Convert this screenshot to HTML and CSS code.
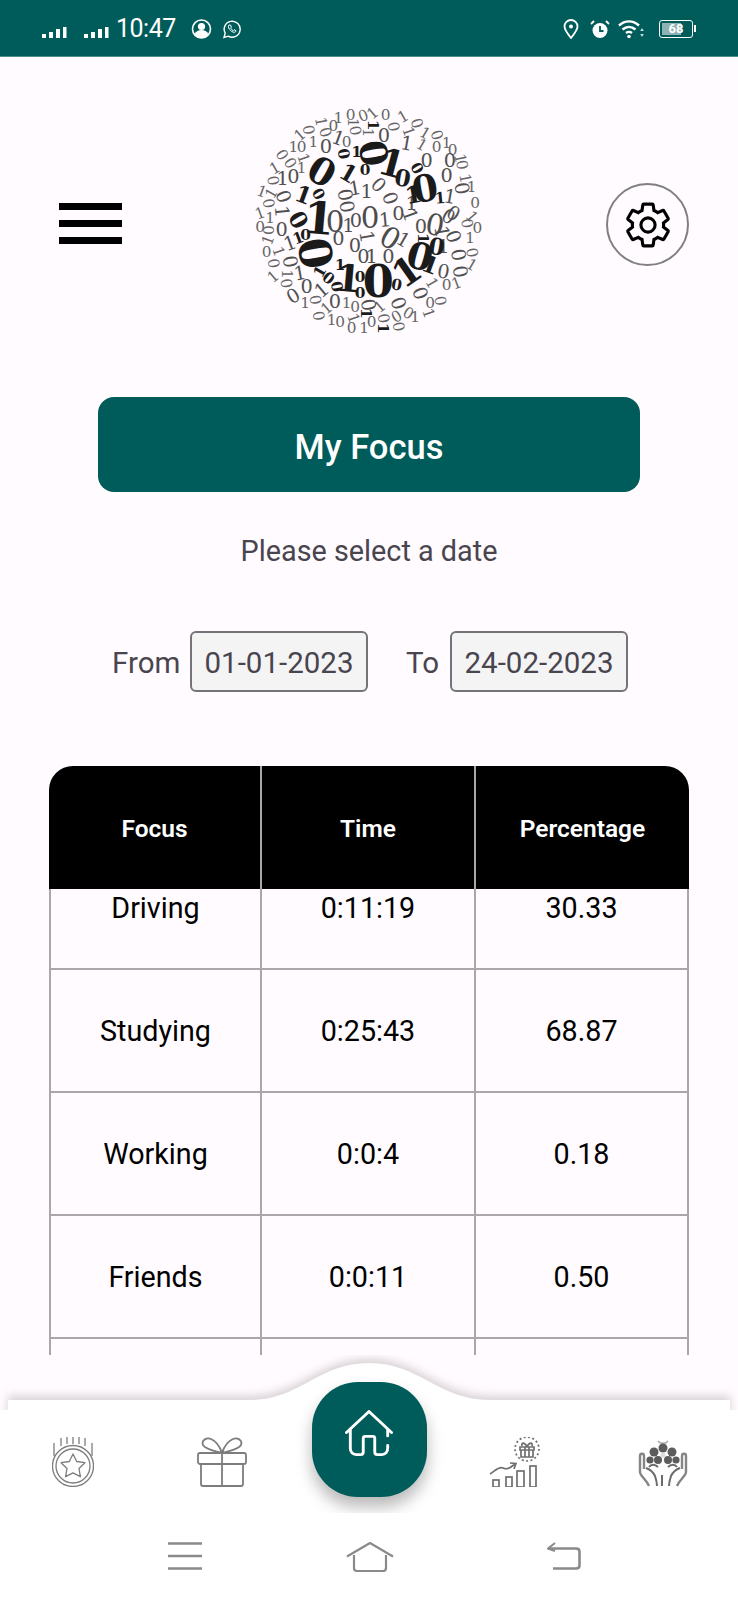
FILE: index.html
```html
<!DOCTYPE html>
<html lang="en">
<head>
    <meta charset="UTF-8">
    <meta name="viewport" content="width=device-width, initial-scale=1.0">
    <title>My Focus</title>
    <link rel="stylesheet" href="styles.css">
</head>
<body>
    <div class="status-bar">
        <svg class="st-signal" viewBox="0 0 25 11"><rect x="0" y="7" width="4" height="4"/><rect x="7" y="5" width="4" height="6"/><rect x="14" y="2" width="4" height="9"/><rect x="21" y="0" width="3.5" height="11"/></svg>
        <svg class="st-signal st-signal-2" viewBox="0 0 25 11"><rect x="0" y="7" width="4" height="4"/><rect x="7" y="5" width="4" height="6"/><rect x="14" y="2" width="4" height="9"/><rect x="21" y="0" width="3.5" height="11"/></svg>
        <span class="st-time">10:47</span>
        <svg class="st-person" viewBox="0 0 21 20"><circle cx="10.5" cy="10" r="9" fill="none" stroke="#fff" stroke-width="1.6"/><circle cx="10.5" cy="7.5" r="3.6" fill="#fff"/><path d="M3.5 15.5c1.5-3.5 4-4.5 7-4.5s5.500 1 7 4.500c-2 2.500-4.500 3.500-7 3.500s-5-1-7-3.500z" fill="#fff"/></svg>
        <svg class="st-whatsapp" viewBox="0 0 20 20" fill="none" stroke="#fff" stroke-width="1.400"><path d="M2 18.500l1.200-4.300a8 8 0 1 1 3 3z"/><path d="M7 6c-1 1-.8 2.500.5 4.300s3 2.900 4.700 3c1 0 1.800-.8 1.800-1.600l-2-1-.9.900c-1-.4-2-1.400-2.500-2.500l.8-1-.9-2.100z" stroke-width="1"/></svg>
        <span class="st-spacer"></span>
        <svg class="st-pin" viewBox="0 0 16 20" fill="none" stroke="#fff" stroke-width="1.800"><path d="M8 19C4 14 1.500 10.500 1.500 7.500a6.500 6.500 0 0 1 13 0C14.500 10.500 12 14 8 19z"/><circle cx="8" cy="7.500" r="2" fill="#fff" stroke="none"/></svg>
        <svg class="st-alarm" viewBox="0 0 20 20"><circle cx="10" cy="11.500" r="7.500" fill="#fff"/><path d="M10 7v5h3.500" fill="none" stroke="#005c5a" stroke-width="1.800"/><path d="M1 5l3-3M19 5l-3-3" stroke="#fff" stroke-width="1.800" fill="none"/></svg>
        <svg class="st-wifi" viewBox="0 0 26 20" fill="none" stroke="#fff" stroke-width="2.400"><path d="M1 6.500c6-5.500 14-5.500 20 0M4.500 10.500c4-3.500 9-3.500 13 0M8 14c2-1.500 4-1.500 6 0"/><circle cx="11" cy="17.500" r="1.800" fill="#fff" stroke="none"/><path d="M24 9l-1.800 3h3.600zM24 18l-1.800-3h3.600z" fill="#c4dcdb" stroke="none"/></svg>
        <div class="st-battery"><span class="st-battery-level">68</span></div>
    </div>

    <div class="top-row">
        <div class="menu-btn"><span></span><span></span><span></span></div>

        <svg class="logo" viewBox="0 0 780 720">
            <g class="bit bit-xs">
                <text transform="translate(332 45) rotate(0)">0</text>
                <text transform="translate(370 48) rotate(-20)">0</text>
                <text transform="translate(398 40) rotate(-40)">1</text>
                <text transform="translate(437 45)">0</text>
                <text transform="translate(490 50) rotate(-30)">1</text>
                <text transform="translate(530 70) rotate(70)">0</text>
                <text transform="translate(242 65) rotate(80)">1</text>
                <text transform="translate(280 78)">0</text>
                <text transform="translate(295 55)">1</text>
                <text transform="translate(340 68) rotate(90)">1</text>
                <text transform="translate(345 92) rotate(80)">0</text>
                <text transform="translate(460 80) rotate(80)">0</text>
                <text transform="translate(385 98) rotate(90)">1</text>
                <text transform="translate(505 95) rotate(70)">1</text>
                <text transform="translate(555 100) rotate(30)">1</text>
                <text transform="translate(590 105) rotate(70)">0</text>
                <text transform="translate(205 90) rotate(80)">0</text>
                <text transform="translate(255 97) rotate(70)">0</text>
                <text transform="translate(180 105) rotate(-40)">1</text>
                <text transform="translate(545 135) rotate(30)">1</text>
                <text transform="translate(620 130)">1</text>
                <text transform="translate(590 140)">0</text>
                <text transform="translate(638 150)">0</text>
                <text transform="translate(665 195) rotate(80)">0</text>
                <text transform="translate(660 175) rotate(80)">1</text>
                <text transform="translate(125 165) rotate(60)">0</text>
                <text transform="translate(160 140)">1</text>
                <text transform="translate(185 140)">0</text>
                <text transform="translate(220 125)">1</text>
                <text transform="translate(320 125)">0</text>
                <text transform="translate(190 175) rotate(70)">1</text>
                <text transform="translate(150 190) rotate(60)">0</text>
                <text transform="translate(105 205) rotate(-30)">1</text>
                <text transform="translate(185 205)">1</text>
                <text transform="translate(98 242) rotate(80)">0</text>
                <text transform="translate(675 235) rotate(80)">1</text>
                <text transform="translate(65 275) rotate(20)">1</text>
                <text transform="translate(95 280) rotate(-60)">1</text>
                <text transform="translate(85 310) rotate(80)">0</text>
                <text transform="translate(695 260)">1</text>
                <text transform="translate(705 310)">0</text>
                <text transform="translate(60 340) rotate(-20)">1</text>
                <text transform="translate(90 355)">1</text>
                <text transform="translate(695 350) rotate(50)">1</text>
                <text transform="translate(680 370) rotate(80)">0</text>
                <text transform="translate(712 385)">0</text>
                <text transform="translate(60 380)">0</text>
                <text transform="translate(85 390) rotate(90)">0</text>
                <text transform="translate(85 420) rotate(-70)">1</text>
                <text transform="translate(690 415)">1</text>
                <text transform="translate(80 455)">0</text>
                <text transform="translate(115 455) rotate(70)">1</text>
                <text transform="translate(100 490) rotate(80)">0</text>
                <text transform="translate(695 458) rotate(80)">0</text>
                <text transform="translate(100 530) rotate(-40)">1</text>
                <text transform="translate(140 522) rotate(90)">1</text>
                <text transform="translate(138 550) rotate(80)">0</text>
                <text transform="translate(695 495) rotate(30)">1</text>
                <text transform="translate(650 550) rotate(-20)">1</text>
                <text transform="translate(620 555)">0</text>
                <text transform="translate(575 550) rotate(60)">1</text>
                <text transform="translate(225 600) rotate(80)">0</text>
                <text transform="translate(195 610)">1</text>
                <text transform="translate(260 625) rotate(-40)">1</text>
                <text transform="translate(320 610)">1</text>
                <text transform="translate(235 648) rotate(80)">0</text>
                <text transform="translate(300 665)">0</text>
                <text transform="translate(275 660)">1</text>
                <text transform="translate(335 685)">0</text>
                <text transform="translate(340 655) rotate(70)">1</text>
                <text transform="translate(345 620)">0</text>
                <text transform="translate(372 685)">1</text>
                <text transform="translate(395 665)">0</text>
                <text transform="translate(430 655) rotate(80)">0</text>
                <text transform="translate(420 620) rotate(-40)">1</text>
                <text transform="translate(475 680) rotate(80)">0</text>
                <text transform="translate(470 650) rotate(-30)">0</text>
                <text transform="translate(505 640) rotate(30)">0</text>
                <text transform="translate(525 650)">1</text>
                <text transform="translate(565 640) rotate(70)">1</text>
                <text transform="translate(570 610)">0</text>
                <text transform="translate(600 603) rotate(80)">0</text>
            </g>
            <g class="bit bit-sm">
                <text transform="translate(432 105)">0</text>
                <text transform="translate(500 130) rotate(10)">1</text>
                <text transform="translate(258 140)">0</text>
                <text transform="translate(295 115) rotate(20)">1</text>
                <text transform="translate(160 230)">0</text>
                <text transform="translate(128 235)">1</text>
                <text transform="translate(620 225)">0</text>
                <text transform="translate(560 180)">0</text>
                <text transform="translate(630 180)">0</text>
                <text transform="translate(130 290) rotate(70)">0</text>
                <text transform="translate(665 265) rotate(80)">0</text>
                <text transform="translate(630 290) rotate(10)">1</text>
                <text transform="translate(125 335) rotate(85)">1</text>
                <text transform="translate(640 340) rotate(30)">0</text>
                <text transform="translate(125 388)">0</text>
                <text transform="translate(150 430) rotate(-20)">1</text>
                <text transform="translate(640 410) rotate(70)">0</text>
                <text transform="translate(605 395) rotate(80)">1</text>
                <text transform="translate(610 440)">1</text>
                <text transform="translate(150 485) rotate(80)">0</text>
                <text transform="translate(655 465) rotate(80)">0</text>
                <text transform="translate(180 520) rotate(-10)">1</text>
                <text transform="translate(200 558)">0</text>
                <text transform="translate(160 588) rotate(-30)">0</text>
                <text transform="translate(660 515) rotate(80)">0</text>
                <text transform="translate(610 515) rotate(10)">0</text>
                <text transform="translate(285 605)">0</text>
                <text transform="translate(385 615) rotate(80)">0</text>
                <text transform="translate(475 610) rotate(70)">0</text>
                <text transform="translate(540 580) rotate(70)">0</text>
                <text transform="translate(315 285) rotate(80)">0</text>
                <text transform="translate(345 265) rotate(-10)">1</text>
                <text transform="translate(380 275)">1</text>
                <text transform="translate(415 255) rotate(45)">0</text>
                <text transform="translate(450 295) rotate(70)">0</text>
                <text transform="translate(320 320) rotate(80)">0</text>
                <text transform="translate(325 375)">1</text>
                <text transform="translate(348 362)">0</text>
                <text transform="translate(435 360) rotate(-5)">1</text>
                <text transform="translate(475 340)">0</text>
                <text transform="translate(515 310)">1</text>
                <text transform="translate(510 345) rotate(70)">1</text>
                <text transform="translate(543 380)">0</text>
                <text transform="translate(625 350) rotate(30)">0</text>
                <text transform="translate(380 410) rotate(80)">1</text>
                <text transform="translate(345 435)">0</text>
                <text transform="translate(395 470)">1</text>
                <text transform="translate(370 470)">0</text>
                <text transform="translate(445 470)">0</text>
                <text transform="translate(490 420) rotate(30)">1</text>
                <text transform="translate(295 415)">0</text>
                <text transform="translate(245 570) rotate(-40)">1</text>
            </g>
            <g class="bit bit-md">
                <text transform="translate(285 365)">0</text>
                <text transform="translate(390 355)">0</text>
                <text transform="translate(585 375) rotate(10)">0</text>
                <text transform="translate(450 415) rotate(30)">0</text>
            </g>
            <g class="bit bit-dark-sm">
                <text transform="translate(310 162) rotate(80)">0</text>
                <text transform="translate(350 155)">1</text>
                <text transform="translate(375 210)">0</text>
                <text transform="translate(530 205) rotate(60)">0</text>
                <text transform="translate(600 295) rotate(-5)">1</text>
                <text transform="translate(235 282) rotate(60)">0</text>
                <text transform="translate(175 415) rotate(-20)">1</text>
                <text transform="translate(197 405)">0</text>
                <text transform="translate(300 495)">1</text>
                <text transform="translate(265 535) rotate(40)">0</text>
                <text transform="translate(240 515) rotate(-60)">1</text>
                <text transform="translate(290 560) rotate(80)">0</text>
                <text transform="translate(360 530)">0</text>
                <text transform="translate(360 580)">0</text>
                <text transform="translate(470 555) rotate(10)">0</text>
                <text transform="translate(550 415) rotate(90)">1</text>
                <text transform="translate(400 75) rotate(90)">1</text>
                <text transform="translate(430 685) rotate(90)">1</text>
                <text transform="translate(378 640) rotate(90)">1</text>
            </g>
            <g class="bit bit-dark-md">
                <text transform="translate(325 220) rotate(30)">1</text>
                <text transform="translate(488 235) rotate(10)">0</text>
                <text transform="translate(520 285) rotate(-10)">1</text>
                <text transform="translate(190 285) rotate(20)">1</text>
                <text transform="translate(175 360) rotate(60)">0</text>
                <text transform="translate(590 440) rotate(10)">0</text>
                <text transform="translate(570 495) rotate(20)">1</text>
            </g>
            <g class="bit bit-dark-lg">
                <text transform="translate(245 215) rotate(30)">0</text>
                <text transform="translate(400 160) rotate(80)">0</text>
                <text transform="translate(455 190) rotate(15)">1</text>
                <text transform="translate(555 265) rotate(-10)">0</text>
                <text transform="translate(325 535) rotate(5)">1</text>
                <text transform="translate(500 515) rotate(-35)">1</text>
                <text transform="translate(540 470) rotate(15)">0</text>
            </g>
            <g class="bit bit-dark-xl">
                <text transform="translate(237 355) rotate(5)">1</text>
                <text transform="translate(225 460) rotate(80)">0</text>
                <text transform="translate(415 545)">0</text>
            </g>
        </svg>

        <div class="settings-btn">
            <svg viewBox="0 0 24 24" width="50" height="50" fill="none" stroke="#000" stroke-width="1.500"><path d="M19.430 12.980c.04-.32.07-.64.07-.98s-.03-.66-.07-.98l2.110-1.650c.19-.15.24-.42.12-.64l-2-3.460c-.12-.22-.39-.3-.61-.22l-2.490 1c-.52-.4-1.080-.73-1.690-.98l-.38-2.650C14.460 2.180 14.250 2 14 2h-4c-.25 0-.46.18-.49.42l-.38 2.650c-.61.25-1.170.59-1.690.98l-2.490-1c-.23-.09-.49 0-.61.22l-2 3.460c-.13.22-.07.49.12.64l2.110 1.650c-.04.32-.07.65-.07.98s.03.66.07.98l-2.110 1.650c-.19.15-.24.42-.12.64l2 3.460c.12.22.39.3.61.22l2.490-1c.52.4 1.080.73 1.690.98l.38 2.650c.03.24.24.42.49.42h4c.25 0 .46-.18.49-.42l.38-2.650c.61-.25 1.170-.59 1.690-.98l2.490 1c.23.09.49 0 .61-.22l2-3.460c.12-.22.07-.49-.12-.64l-2.110-1.650z"/><circle cx="12" cy="12" r="3.400"/></svg>
        </div>
    </div>

    <div class="title-btn">My Focus</div>
    <p class="hint">Please select a date</p>

    <div class="date-row">
        <span class="date-label">From</span>
        <span class="date-box">01-01-2023</span>
        <span class="date-label date-label-to">To</span>
        <span class="date-box">24-02-2023</span>
    </div>

    <div class="focus-table">
        <div class="table-head">
            <div>Focus</div>
            <div>Time</div>
            <div>Percentage</div>
        </div>
        <div class="table-body">
            <div class="table-scroll">
                <div class="table-row"><div>Driving</div><div>0:11:19</div><div>30.33</div></div>
                <div class="table-row"><div>Studying</div><div>0:25:43</div><div>68.87</div></div>
                <div class="table-row"><div>Working</div><div>0:0:4</div><div>0.18</div></div>
                <div class="table-row"><div>Friends</div><div>0:0:11</div><div>0.50</div></div>
                <div class="table-row"><div></div><div></div><div></div></div>
            </div>
        </div>
    </div>

    <div class="bottom-nav">
        <svg class="nav-curve" viewBox="0 0 738 55"><path d="M8 45H250C300 45 318 8 369 8S438 45 490 45H730V75H8Z"/></svg>

        <svg class="nav-icon" viewBox="0 0 42 50" width="42" height="50" fill="none" stroke="#7d7d7d" stroke-width="1.300">
            <path d="M2 19V6M40 19V6M9 9V1M15 7V0M21 7V0M27 7V0M33 9V1"/>
            <ellipse cx="21" cy="29" rx="20.500" ry="20.500"/>
            <circle cx="21" cy="29" r="17"/>
            <path d="M21 17l3.700 7.500 8.200 1.200-5.900 5.800 1.400 8.200-7.400-3.900-7.400 3.900 1.400-8.200-5.900-5.800 8.200-1.200z" stroke-linejoin="round"/>
        </svg>

        <svg class="nav-icon" viewBox="0 0 50 50" width="50" height="50" fill="none" stroke="#7d7d7d" stroke-width="1.800" stroke-linejoin="round">
            <path d="M25 16C19 14 9 13 6 8c-2-5 4-8 8-6 5 2 9 8 11 14zM25 16c6-2 16-3 19-8 2-5-4-8-8-6-5 2-9 8-11 14z"/>
            <rect x="1" y="16" width="48" height="11" rx="2"/>
            <path d="M4 27v20c0 1 1 2 2 2h38c1 0 2-1 2-2V27M25 16v33"/>
        </svg>

        <div class="home-btn">
            <svg viewBox="0 0 50 48" width="48" height="46" fill="none" stroke="#fff" stroke-width="3" stroke-linecap="round" stroke-linejoin="round">
                <path d="M1.500 23.500L25 1.500l23.500 22"/>
                <path d="M5.500 20v20c0 4 2.500 6.500 6 6.500h5c2 0 2.500-1 2.500-3V29.500c0-1.500 .5-2 2-2h8c1.500 0 2 .5 2 2v14c0 2 .5 3 2.500 3h5c3.500 0 6-2.500 6-6.500v-3"/>
                <path d="M44.500 27v-7"/>
            </svg>
        </div>

        <svg class="nav-icon" viewBox="0 0 52 50" width="52" height="50" fill="none" stroke="#6f6f6f" stroke-width="1.700">
            <circle cx="38" cy="12" r="12" stroke-dasharray="2 2.400"/>
            <path d="M31 10h14v3h-14zM32 13h12v7h-12zM36 10v10M40 10v10M38 10c-2-5-6-5-5-1M38 10c2-5 6-5 5-1"/>
            <path d="M1 37c5-3 9-8 13-6s7 0 12-4M21 26l6 .5-2 5.500"/>
            <rect x="4" y="43" width="6" height="7"/><rect x="17" y="40" width="6" height="10"/><rect x="28" y="34" width="7" height="16"/><rect x="41" y="29" width="6" height="21"/>
        </svg>

        <svg class="nav-icon" viewBox="0 0 52 50" width="52" height="50" fill="none" stroke="#6b6b6b" stroke-width="2.400">
            <path d="M21 4c2 3 8 3 10 0" stroke-width="1.400" stroke="#aaa"/>
            <g fill="#5c5c5c" stroke="none">
                <circle cx="26" cy="11" r="4.500"/><circle cx="17" cy="15" r="4.500"/><circle cx="35" cy="15" r="4.500"/><circle cx="13" cy="23" r="3.600"/><circle cx="39" cy="23" r="3.600"/><circle cx="21" cy="23" r="4"/><circle cx="31" cy="23" r="4"/>
            </g>
            <circle cx="26" cy="18" r="2.500" fill="#dcdcdc" stroke="none"/>
            <path d="M12 30c2-3 6-3 9 0M40 30c-2-3-6-3-9 0" stroke-width="2"/>
            <path d="M3 19v16c0 4 6 7 9 14M7 19v13M3 19c0-3 4-3 4 0M49 19v16c0 4-6 7-9 14M45 19v13M49 19c0-3-4-3-4 0" stroke="#858585"/>
            <path d="M9 31c3 1 7 4 9 8 1 3 2 6 2 10M43 31c-3 1-7 4-9 8-1 3-2 6-2 10M25 38v11" stroke-width="2"/>
        </svg>
    </div>

    <div class="system-nav">
        <svg class="sys-menu" viewBox="0 0 34 28"><path d="M0 1.500h34M0 14h34M0 26.500h34" stroke="#8a8a8a" stroke-width="2.600"/></svg>
        <svg class="sys-home" viewBox="0 0 48 30" fill="none" stroke="#8a8a8a" stroke-width="2.200" stroke-linejoin="round"><path d="M1 14.500L24 1l23 13.500"/><path d="M8 13v13c0 2 1 3 3 3h26c2 0 3-1 3-3V13"/></svg>
        <svg class="sys-back" viewBox="0 0 34 28" fill="none" stroke="#8a8a8a" stroke-width="2.600"><path d="M1 6.500h28c2 0 3.500 1 3.500 3v14c0 2-1.500 3-3.500 3H6"/><path d="M8 1L1 6.500 8 9" stroke-width="2"/></svg>
    </div>
</body>
</html>
```

FILE: styles.css
```css
body {
    font-family: Roboto, "Liberation Sans", sans-serif;
    margin: 0;
    width: 738px;
    height: 1600px;
    overflow: hidden;
    background-color: #fffbfe;
    color: #49454f;
}

/* status bar */
.status-bar {
    display: flex;
    align-items: center;
    height: 57px;
    padding: 0 45px 0 42px;
    background-color: #005c5a;
    box-shadow: inset 0 -1px 0 #4d8d8b;
    box-sizing: border-box;
    fill: #fff;
}

.st-signal {
    width: 25px;
    height: 11px;
    margin-top: 8px;
}

.st-signal-2 {
    margin-left: 17px;
}

.st-time {
    margin-left: 7px;
    font-size: 25px;
    color: #fff;
    letter-spacing: -0.5px;
}

.st-person {
    width: 21px;
    height: 20px;
    margin-left: 15px;
}

.st-whatsapp {
    width: 20px;
    height: 20px;
    margin-left: 10px;
}

.st-spacer {
    flex-grow: 1;
}

.st-pin {
    width: 16px;
    height: 20px;
}

.st-alarm {
    width: 20px;
    height: 20px;
    margin-left: 11px;
}

.st-wifi {
    width: 26px;
    height: 20px;
    margin-left: 8px;
}

.st-battery {
    position: relative;
    width: 34px;
    height: 18px;
    margin-left: 15px;
    padding: 2px;
    border: 1.5px solid #fff;
    border-radius: 3px;
    box-sizing: border-box;
}

.st-battery::after {
    content: "";
    position: absolute;
    right: -4px;
    top: 4px;
    width: 2px;
    height: 7px;
    background-color: #fff;
}

.st-battery-level {
    display: block;
    height: 100%;
    background: linear-gradient(90deg, #8fb3b2 68%, transparent 68%);
    font-size: 13px;
    font-weight: 700;
    line-height: 11px;
    color: #fff;
    text-align: center;
    white-space: nowrap;
}

/* header row */
.top-row {
    display: flex;
    align-items: flex-start;
    height: 340px;
}

.menu-btn {
    display: flex;
    flex-direction: column;
    gap: 10px;
    width: 63px;
    margin-top: 146px;
    margin-left: 59px;
}

.menu-btn span {
    height: 7px;
    background-color: #000;
}

.logo {
    width: 260px;
    height: 240px;
    margin-top: 43px;
    margin-left: 118px;
}

.bit text {
    font-family: "DejaVu Serif", serif;
    text-anchor: middle;
    dominant-baseline: central;
}

.bit-xs { font-size: 46px; fill: #666; }
.bit-sm { font-size: 58px; fill: #505050; }
.bit-md { font-size: 88px; fill: #4c4c4c; }
.bit-dark-sm { font-size: 46px; font-weight: 700; fill: #1c1c1c; }
.bit-dark-md { font-size: 70px; font-weight: 700; fill: #1c1c1c; }
.bit-dark-lg { font-size: 112px; font-weight: 700; fill: #1a1a1a; }
.bit-dark-xl { font-size: 134px; font-weight: 700; fill: #1a1a1a; }

.settings-btn {
    display: flex;
    justify-content: center;
    align-items: center;
    width: 83px;
    height: 83px;
    margin-top: 126px;
    margin-left: 106px;
    border: 2.5px solid #808080;
    border-radius: 50%;
    box-sizing: border-box;
}

/* title and dates */
.title-btn {
    display: flex;
    justify-content: center;
    align-items: center;
    height: 95px;
    margin: 0 98px;
    padding-top: 4px;
    background-color: #005c5a;
    border-radius: 16px;
    box-sizing: border-box;
    font-size: 34.5px;
    font-weight: 500;
    color: #fff;
}

.hint {
    margin: 41px 0 62px;
    font-size: 28.800px;
    line-height: 36px;
    text-align: center;
}

.date-row {
    display: flex;
    align-items: center;
    height: 61px;
    padding-left: 112px;
    font-size: 29.5px;
}

.date-label {
    width: 78px;
    padding-top: 2px;
}

.date-label-to {
    width: 44px;
    margin-left: 38px;
}

.date-box {
    display: flex;
    justify-content: center;
    align-items: center;
    width: 178px;
    height: 61px;
    padding-top: 2px;
    background-color: #f5f4f5;
    border: 2.5px solid #75737a;
    border-radius: 6px;
    box-sizing: border-box;
}

/* table */
.focus-table {
    width: 640px;
    margin: 74px 0 0 49px;
    color: #000;
    font-size: 28.700px;
}

.table-head {
    display: grid;
    grid-template-columns: 213px 214px 213px;
    height: 123px;
    background-color: #000;
    border-radius: 24px 24px 0 0;
    color: #fff;
    font-size: 24.5px;
    font-weight: 600;
}

.table-head div {
    display: flex;
    justify-content: center;
    align-items: center;
    padding-top: 2px;
}

.table-head div:not(:last-child) {
    border-right: 2px solid #a9a7ab;
}

.table-body {
    height: 466px;
    overflow: hidden;
}

.table-scroll {
    margin-top: -42px;
}

.table-row {
    display: grid;
    grid-template-columns: 213px 214px 213px;
    height: 123px;
    border-bottom: 2px solid #a9a7ab;
    box-sizing: border-box;
}

.table-row div {
    display: flex;
    justify-content: center;
    align-items: center;
    border-right: 2px solid #a9a7ab;
}

.table-row div:first-child {
    border-left: 2px solid #a9a7ab;
}

/* bottom nav */
.bottom-nav {
    position: relative;
    display: grid;
    grid-template-columns: 146px 151px 144px 148px 148px;
    justify-items: center;
    align-items: start;
    height: 158px;
    padding-top: 27px;
    overflow: hidden;
    box-sizing: border-box;
    background: linear-gradient(transparent 55px, #fff 55px);
}

.nav-curve {
    position: absolute;
    left: 0;
    top: 0;
    width: 738px;
    height: 55px;
    fill: #fff;
}

.nav-curve path {
    filter: drop-shadow(0 -4px 5px rgba(110, 100, 105, 0.28));
}

.nav-icon {
    position: relative;
    margin-top: 55px;
}

.home-btn {
    position: relative;
    display: flex;
    justify-content: center;
    align-items: center;
    width: 115px;
    height: 115px;
    padding-bottom: 14px;
    background-color: #005c5a;
    border-radius: 46px;
    box-shadow: 0 10px 16px rgba(0, 0, 0, 0.28);
    box-sizing: border-box;
}

/* android buttons */
.system-nav {
    display: flex;
    align-items: flex-start;
    height: 87px;
    padding: 29px 0 0 168px;
    background-color: #fff;
    box-sizing: border-box;
}

.sys-menu {
    width: 34px;
    height: 28px;
}

.sys-home {
    width: 48px;
    height: 30px;
    margin-left: 144px;
}

.sys-back {
    width: 34px;
    height: 28px;
    margin-left: 153px;
}
```
